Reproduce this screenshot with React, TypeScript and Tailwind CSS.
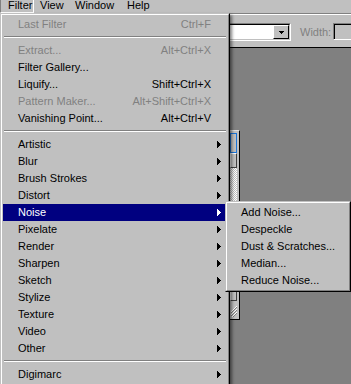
import React from "react";

type Item =
  | { sep: true }
  | { sep?: false; label: string; sc?: string; dis?: boolean; arrow?: boolean; hi?: boolean };

const menu: Item[] = [
  { label: "Last Filter", sc: "Ctrl+F", dis: true },
  { sep: true },
  { label: "Extract...", sc: "Alt+Ctrl+X", dis: true },
  { label: "Filter Gallery..." },
  { label: "Liquify...", sc: "Shift+Ctrl+X" },
  { label: "Pattern Maker...", sc: "Alt+Shift+Ctrl+X", dis: true },
  { label: "Vanishing Point...", sc: "Alt+Ctrl+V" },
  { sep: true },
  { label: "Artistic", arrow: true },
  { label: "Blur", arrow: true },
  { label: "Brush Strokes", arrow: true },
  { label: "Distort", arrow: true },
  { label: "Noise", arrow: true, hi: true },
  { label: "Pixelate", arrow: true },
  { label: "Render", arrow: true },
  { label: "Sharpen", arrow: true },
  { label: "Sketch", arrow: true },
  { label: "Stylize", arrow: true },
  { label: "Texture", arrow: true },
  { label: "Video", arrow: true },
  { label: "Other", arrow: true },
  { sep: true },
  { label: "Digimarc", arrow: true },
];

const sub = ["Add Noise...", "Despeckle", "Dust & Scratches...", "Median...", "Reduce Noise..."];

function RightArrow({ white }: { white?: boolean }) {
  return (
    <svg width="4" height="7" viewBox="0 0 4 7" shapeRendering="crispEdges" className="block shrink-0">
      <path d="M0 0h1v7h-1z M1 1h1v5h-1z M2 2h1v3h-1z M3 3h1v1h-1z" fill={white ? "#ffffff" : "#000000"} />
    </svg>
  );
}

function DownArrow() {
  return (
    <svg width="5" height="3" viewBox="0 0 5 3" shapeRendering="crispEdges" className="block">
      <path d="M0 0h5v1h-5z M1 1h3v1h-3z M2 2h1v1h-1z" fill="#000000" />
    </svg>
  );
}

function Separator() {
  return (
    <div className="h-[9px] pt-[3px] px-[1px]">
      <div className="h-px bg-[#808080]" />
      <div className="h-px bg-white" />
    </div>
  );
}

export default function App() {
  return (
    <div className="relative w-[351px] h-[384px] overflow-hidden bg-[#c0c0c0] font-['Liberation_Sans',Arial,sans-serif] text-[11px] text-black">
      {/* Menu bar */}
      <div className="flex h-[13px] items-start leading-[10px]">
        <div className="shrink-0 h-[13px] w-[34px] border-l border-b border-r border-l-[#808080] border-b-white border-r-white pl-[7px]">
          Filter
        </div>
        <div className="shrink-0 w-[41px] pl-[6px]">View</div>
        <div className="shrink-0 w-[52px]">Window</div>
        <div className="shrink-0">Help</div>
      </div>

      {/* Tool options bar */}
      <div className="h-[34px] border-t border-[#808080]">
        <div className="h-full border-t border-white flex items-start pt-[8px] pl-[180px] overflow-hidden">
          <div className="shrink-0 w-[111px] h-[18px] border-t border-l border-[#808080] border-b border-r border-b-white border-r-white">
            <div className="h-full border-t border-l border-black border-b border-r border-b-[#c0c0c0] border-r-[#c0c0c0] bg-white flex justify-end items-start">
              <div className="w-[16px] h-[14px] bg-[#c0c0c0] border-t border-l border-white border-b border-r border-b-black border-r-black flex items-center justify-center">
                <DownArrow />
              </div>
            </div>
          </div>
          <div className="shrink-0 ml-[9px] w-[33px] h-[18px] leading-[18px] text-[#808080]">Width:</div>
          <div className="shrink-0 w-[40px] h-[17px] border-t border-l border-[#808080] border-b border-r border-b-white border-r-white">
            <div className="h-full border-t border-l border-black bg-[#c0c0c0]" />
          </div>
        </div>
      </div>

      {/* Workspace */}
      <div className="relative h-[337px] border-t border-black bg-[#808080]">
        <div className="absolute left-[190px] top-[82px] w-[50px] h-[190px] bg-[#c0c0c0] border-t border-t-[#e0e0e0] border-r border-b border-r-black border-b-black flex justify-end">
          <div className="w-[9px] flex flex-col pt-[2px]">
            <div className="flex-1 flex">
              <div className="w-[7px] flex flex-col">
                <div className="h-[20px] border border-[#1a74d8] bg-[#c0c0c0]" />
                <div className="h-[15px] bg-[#c0c0c0] border-t border-l border-white border-b border-r border-b-[#404040] border-r-[#404040]" />
                <div className="flex-1 bg-[repeating-conic-gradient(#ffffff_0%_25%,#c0c0c0_0%_50%)] bg-[length:2px_2px]" />
                <div className="h-[10px] bg-[#c0c0c0] border-t border-l border-white border-b border-r border-b-[#404040] border-r-[#404040]" />
              </div>
            </div>
            <div className="h-[18px] flex items-end justify-center pb-[2px]">
              <svg width="7" height="12" viewBox="0 0 7 12" shapeRendering="crispEdges">
                <path d="M6 1L0 7M6 4L0 10M6 7L1 12" stroke="#ffffff" strokeWidth="1" />
                <path d="M6 2L0 8M6 5L0 11M6 8L2 12" stroke="#808080" strokeWidth="1" />
              </svg>
            </div>
          </div>
        </div>
      </div>

      {/* Filter menu */}
      <div className="absolute left-0 top-[13px] w-[230px] h-[380px] border-t border-l border-[#c0c0c0] border-r border-r-black shadow-[2px_2px_3px_rgba(0,0,0,0.5)]">
        <div className="h-full border-t border-l border-white border-r border-r-[#808080] bg-[#c0c0c0] p-[1px] leading-[17px]">
          {menu.map((it, i) =>
            it.sep ? (
              <Separator key={i} />
            ) : (
              <div
                key={i}
                className={`flex h-[17px] items-center pl-[15px] ${it.arrow ? "pr-[6px]" : "pr-[16px]"} ${
                  it.hi ? "bg-[#000080] text-white" : it.dis ? "text-[#808080]" : "text-black"
                }`}
              >
                <span className="whitespace-nowrap">{it.label}</span>
                <span className="flex-1" />
                {it.sc && <span className="whitespace-nowrap">{it.sc}</span>}
                {it.arrow && <RightArrow white={it.hi} />}
              </div>
            )
          )}
        </div>
      </div>

      {/* Noise submenu */}
      <div className="absolute left-[225px] top-[201px] w-[126px] h-[91px] border-t border-l border-[#c0c0c0] border-r border-b border-r-black border-b-black">
        <div className="h-full border-t border-l border-white border-r border-b border-r-[#808080] border-b-[#808080] bg-[#c0c0c0] p-[1px] leading-[17px]">
          {sub.map((s) => (
            <div key={s} className="h-[17px] pl-[13px] whitespace-nowrap">
              {s}
            </div>
          ))}
        </div>
      </div>
    </div>
  );
}
